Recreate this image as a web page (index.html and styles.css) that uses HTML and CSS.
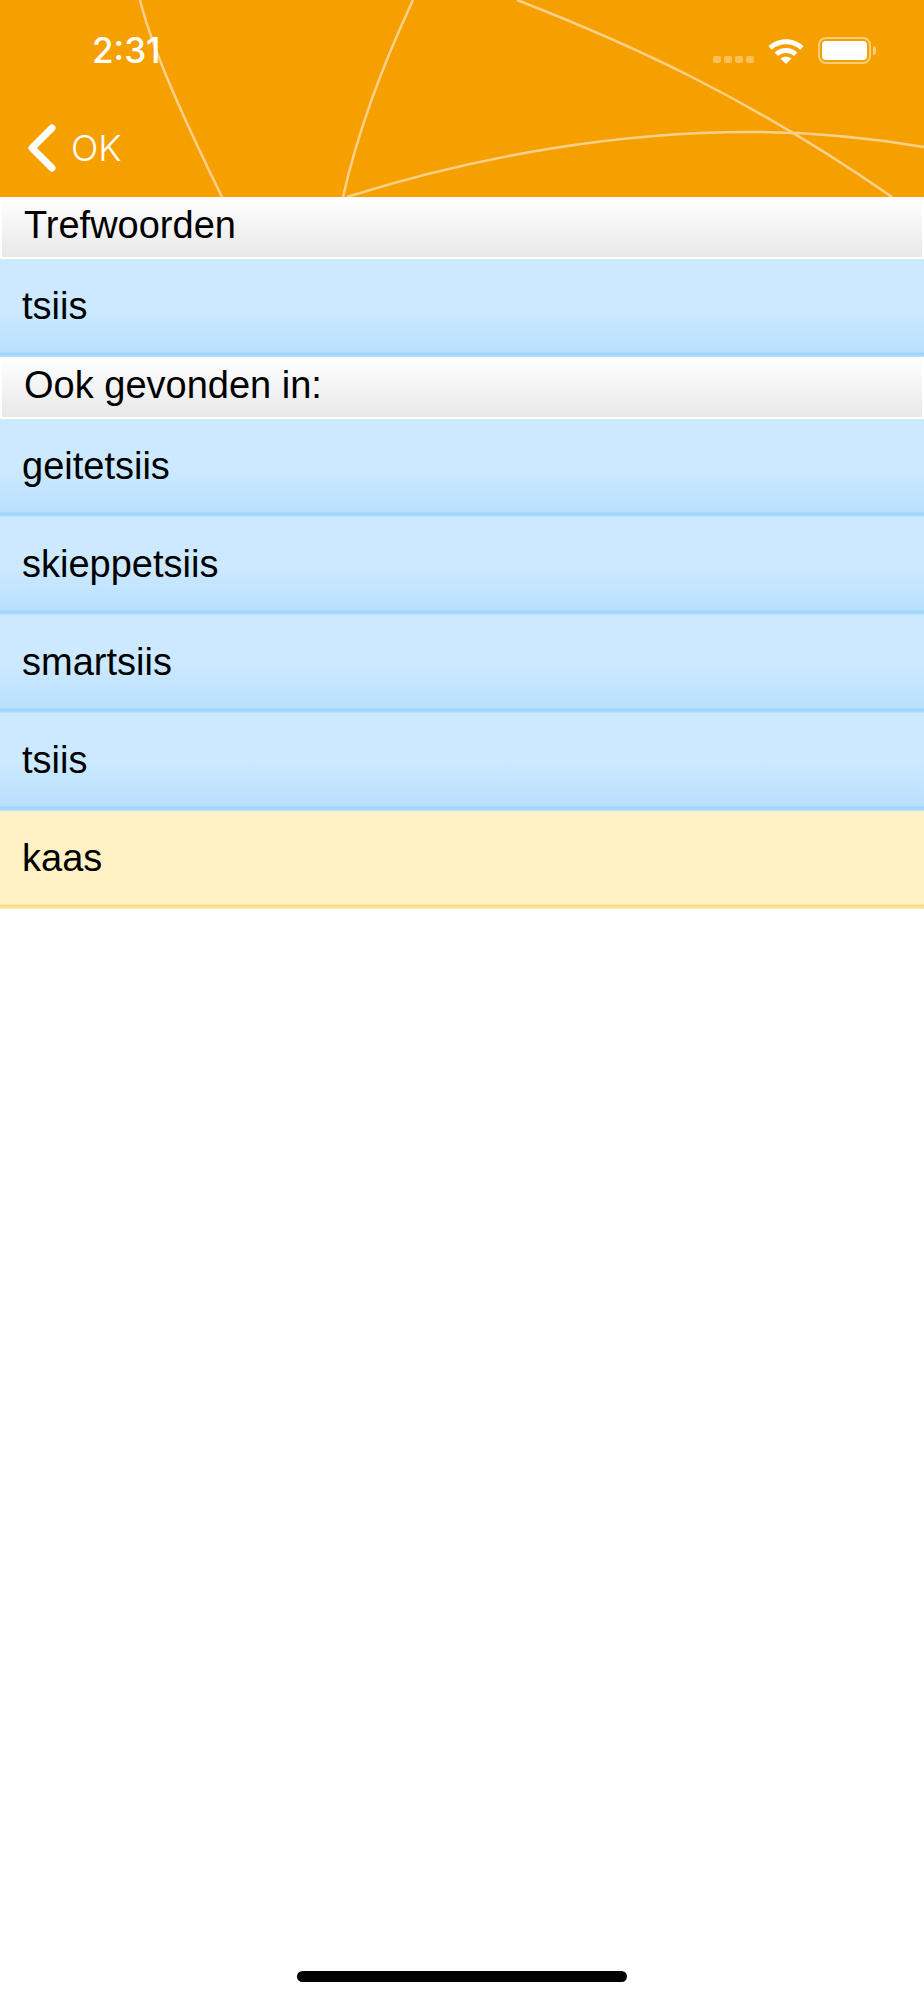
FILE: index.html
```html
<!DOCTYPE html>
<html lang="en">
<head>
  <meta charset="UTF-8" />
  <title>Trefwoorden</title>
  <link rel="stylesheet" href="styles.css">
</head>

<body>
  <div class="top-bar">
    <svg class="top-lines" width="924" height="197" viewBox="0 0 924 197" fill="none">
      <path d="M140 0C150 40 172 95 222 197" />
      <path d="M413 0C385 60 358 130 343 197" />
      <path d="M347 197C480 155 620 132 750 132C810 132 870 138 924 147" />
      <path d="M517 0C625 42 745 95 892 197" />
    </svg>

    <div class="status-bar">
      <span class="time">2:31</span>
      <div class="status-icons">
        <div class="signal">
          <span></span><span></span><span></span><span></span>
        </div>
        <svg class="wifi" width="36" height="27" viewBox="0 0 36 27">
          <path d="M0.5 9.3C10 0 26 0 35.5 9.3L32.2 12.8C24.6 5.4 11.4 5.4 3.8 12.8Z" />
          <path d="M6.6 15.5C13 9.6 23 9.6 29.4 15.5L26 19C21.4 14.9 14.6 14.9 10 19Z" />
          <path d="M12.5 21.5C15.7 19.2 20.3 19.2 23.5 21.5L18 27Z" />
        </svg>
        <div class="battery">
          <div class="battery-fill"></div>
        </div>
        <div class="battery-cap"></div>
      </div>
    </div>

    <div class="nav-bar">
      <svg class="back-arrow" width="30" height="48" viewBox="0 0 30 48" fill="none">
        <path d="M25 4L5 24L25 44" />
      </svg>
      <span class="back-label">OK</span>
    </div>
  </div>

  <div class="section-header">Trefwoorden</div>
  <div class="row">tsiis</div>

  <div class="section-header">Ook gevonden in:</div>
  <div class="row">geitetsiis</div>
  <div class="row">skieppetsiis</div>
  <div class="row">smartsiis</div>
  <div class="row">tsiis</div>
  <div class="row row-yellow">kaas</div>

  <div class="home-indicator"></div>
</body>
</html>
```

FILE: styles.css
```css
body {
  margin: 0;
  height: 2000px;
  position: relative;
  background: white;
  font-family: "Liberation Sans", Arial, sans-serif;
  color: black;
  overflow: hidden;
}
.top-bar {
  position: relative;
  height: 197px;
  background: #f6a000;
  color: white;
  overflow: hidden;
}
.top-lines {
  position: absolute;
  top: 0;
  left: 0;
}
.top-lines path {
  stroke: #fbd08a;
  stroke-width: 2.5;
}
.status-bar {
  position: relative;
  height: 98px;
  display: flex;
  justify-content: space-between;
  align-items: flex-start;
}
.time {
  margin: 28px 0 0 92px;
  font-family: Inter, sans-serif;
  font-size: 35px;
  font-weight: 500;
  line-height: 44px;
}
.status-icons {
  display: flex;
  align-items: flex-start;
  margin: 37px 48px 0 0;
}
.signal {
  display: flex;
  gap: 3px;
  margin: 19px 14px 0 0;
}
.signal span {
  width: 8px;
  height: 7px;
  border-radius: 2px;
  background: #fbbf57;
}
.wifi {
  fill: white;
  margin: 0 14px 0 0;
}
.battery {
  width: 53px;
  height: 27px;
  box-sizing: border-box;
  border: 2px solid #fbcd7c;
  border-radius: 8px;
  padding: 2px;
}
.battery-fill {
  height: 100%;
  background: white;
  border-radius: 4px;
}
.battery-cap {
  width: 3px;
  height: 9px;
  margin: 9px 0 0 2px;
  background: #fbcd7c;
  border-radius: 0 4px 4px 0;
}
.nav-bar {
  position: relative;
  display: flex;
  align-items: center;
  height: 99px;
}
.back-arrow {
  margin-left: 27px;
}
.back-arrow path {
  stroke: white;
  stroke-width: 7;
  stroke-linecap: round;
  stroke-linejoin: round;
}
.back-label {
  margin-left: 14px;
  font-family: Inter, sans-serif;
  font-weight: 300;
  font-size: 36px;
}
.section-header {
  box-sizing: border-box;
  height: 62px;
  padding: 2px 0 0 22px;
  margin: 0 2px;
  border-bottom: 2px solid white;
  background: linear-gradient(#ffffff, #e8e8e8);
  font-size: 38px;
  line-height: 52px;
}
.row {
  height: 98px;
  padding-left: 22px;
  background: linear-gradient(#cce9ff 0%, #cce9ff 50%, #b9e0ff calc(100% - 5px), #9fd5ff calc(100% - 4px), #9fd5ff calc(100% - 2px), #c6e7ff 100%);
  font-size: 38px;
  line-height: 94px;
}
.row-yellow {
  background: linear-gradient(#fff1c4, #fff1c4 calc(100% - 5px), #fbdc8c calc(100% - 4px), #fbdc8c calc(100% - 2px), #fff1c4 100%);
}
.home-indicator {
  position: absolute;
  left: 297px;
  top: 1971px;
  width: 330px;
  height: 11px;
  border-radius: 6px;
  background: black;
}
```
